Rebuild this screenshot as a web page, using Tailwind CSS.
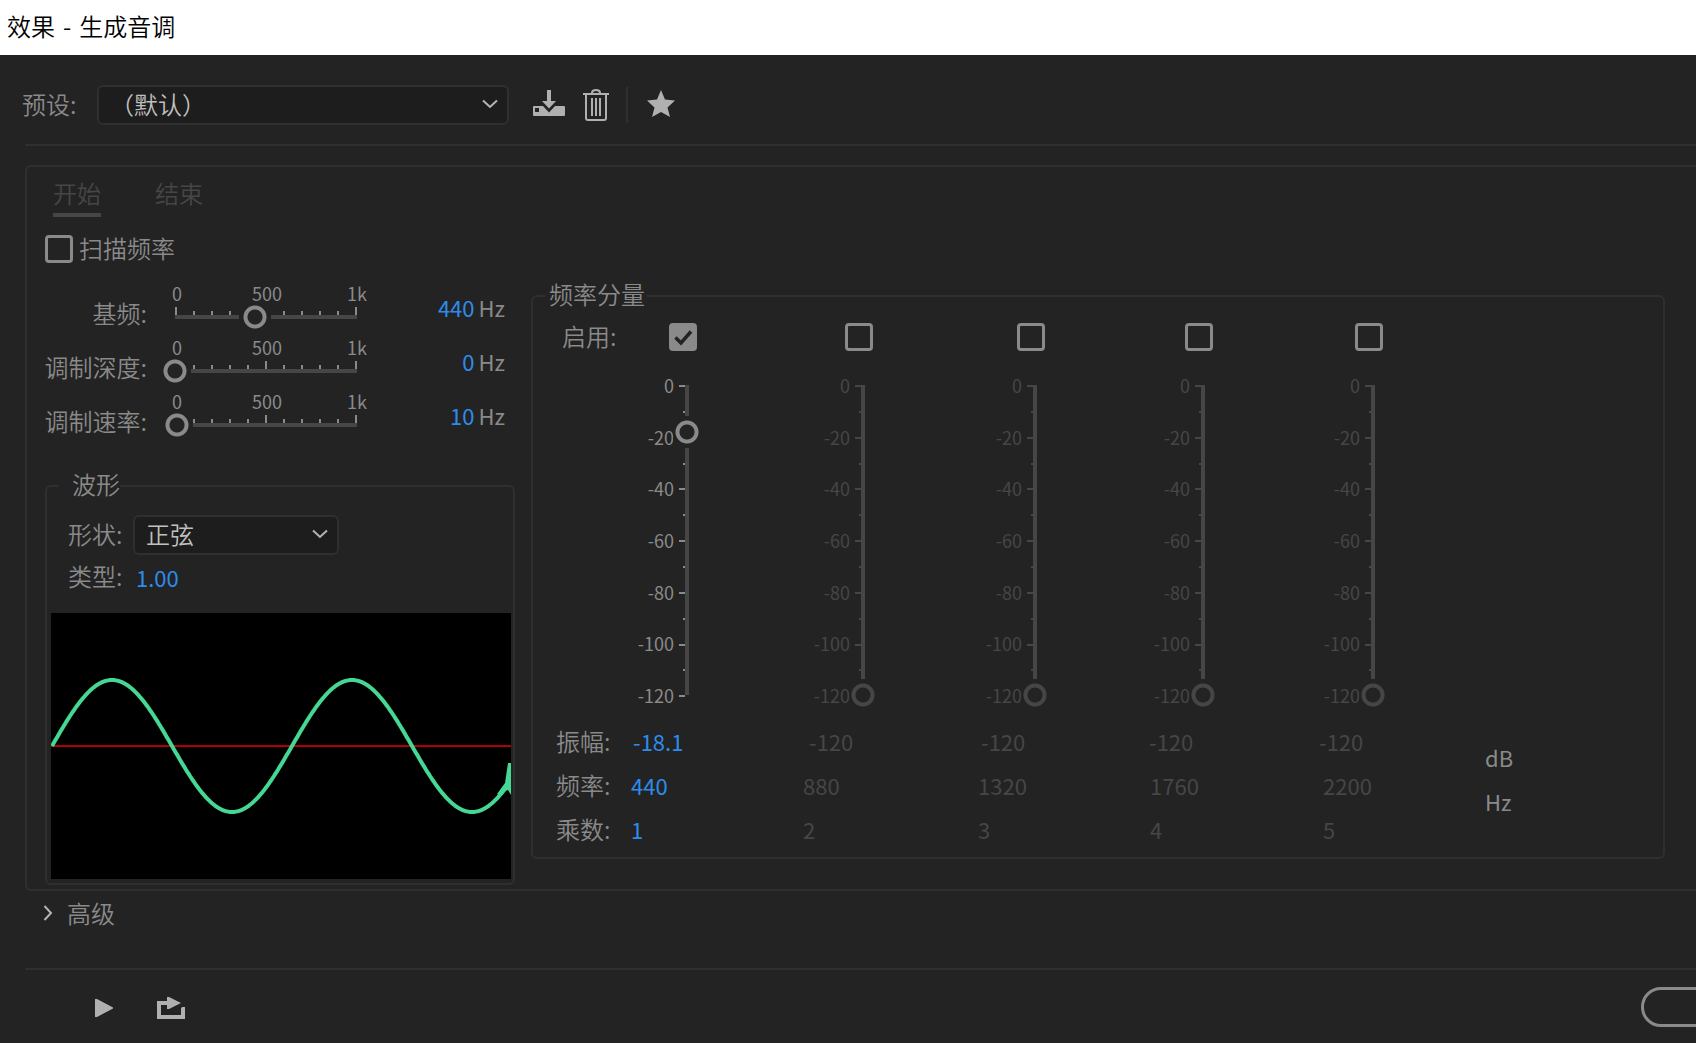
<!DOCTYPE html>
<html lang="zh-CN">
<head>
<meta charset="utf-8">
<title>效果 - 生成音调</title>
<script src="https://cdn.jsdelivr.net/npm/@tailwindcss/browser@4"></script>
</head>
<body class="flex min-h-screen flex-col overflow-x-hidden bg-[#232323] font-['Noto_Sans_CJK_SC',sans-serif] text-2xl/9 font-[350] text-[#8a8a8a]">
<header class="flex h-[55px] shrink-0 items-center bg-white px-[7px] pb-1">
  <h1 class="flex gap-2 text-black"><span>效果</span><span>-</span><span>生成音调</span></h1>
</header>

<main class="flex flex-col pl-[25px]">
  <!-- Preset bar -->
  <div class="-ml-[3px] flex h-[89px] items-center pt-[11px]">
    <label for="preset" class="w-[75px] pb-0.5">预设:</label>
    <div class="relative w-[412px]">
      <select id="preset" class="block h-10 w-full appearance-none rounded-md border-2 border-[#2f2f2f] bg-[#1d1d1d] px-[11px] pb-0.5 text-2xl/8 text-[#c0c0c0]"><option>（默认）</option></select>
      <svg class="pointer-events-none absolute right-[11px] top-[14px]" width="16" height="10" viewBox="0 0 16 10" fill="none" stroke="#b4b4b4" stroke-width="2"><path d="M1 1.500l7 6.500 7-6.500"/></svg>
    </div>
    <button aria-label="保存预设" class="ml-6"><svg class="block" width="32" height="34" viewBox="0 0 32 34" fill="#b0b0b0"><path d="M14 2h4v11h5L16 20.500 9 13h5z"/><path fill-rule="evenodd" d="M1 18h9l6 6.500 6-6.500h9a1 1 0 0 1 1 1v8a1 1 0 0 1-1 1H1a1 1 0 0 1-1-1v-8a1 1 0 0 1 1-1zM2 20v4h4v-4z"/></svg></button>
    <button aria-label="删除预设" class="ml-[18px]"><svg class="block" width="26" height="34" viewBox="0 0 26 34" fill="none" stroke="#b0b0b0" stroke-width="2"><path d="M0 6h26M9 6V4.500Q9.500 2 13 2t4 2.500V6M3 6v24q0 2 2 2h16q2 0 2-2V6M9 10v18M13 10v18M17 10v18"/></svg></button>
    <span class="ml-[17px] h-9 w-0.5 bg-[#2f2f2f]"></span>
    <button aria-label="收藏" class="ml-[19px]"><svg class="block" width="28" height="34" viewBox="0 0 28 34" fill="#b0b0b0"><path d="M14 2l4 9.500 10 1-7.500 7 2.500 9.500-9-5-9 5 2.500-9.500L0 12.500l10-1z"/></svg></button>
  </div>
  <hr class="border-t-2 border-[#2f2f2f]">

  <!-- Tone panel -->
  <section class="mt-[19px] rounded-l-md border-2 border-r-0 border-[#2f2f2f] pb-1 pl-[18px]">
    <nav class="flex gap-[54px] pl-2 pt-2 text-[#464646]">
      <a href="#start" class="border-b-4 border-[#464646] pb-0.5">开始</a>
      <a href="#end">结束</a>
    </nav>
    <label class="mt-[18px] flex h-7 items-center gap-1.5">
      <input type="checkbox" class="size-7 appearance-none rounded border-3 border-[#8a8a8a]"><span class="pb-0.5">扫描频率</span>
    </label>

    <div class="flex gap-4 pt-[13px]">
      <div class="w-[470px] shrink-0">
        <div id="sweeps" class="pt-[9px]"></div>

        <fieldset class="mt-[19px] rounded-md border-2 border-[#2f2f2f] pb-1 pl-1 pr-0.5">
          <legend class="ml-2 pb-1 pl-[13px]">波形</legend>
          <div class="mt-[9px] flex items-center pl-[17px]">
            <label for="shape" class="w-[65px] pb-0.5">形状:</label>
            <div class="relative w-[206px]">
              <select id="shape" class="block h-10 w-full appearance-none rounded-md border-2 border-[#2f2f2f] bg-[#1d1d1d] px-[11px] pb-0.5 text-2xl/8 text-[#c0c0c0]"><option>正弦</option></select>
              <svg class="pointer-events-none absolute right-[11px] top-[14px]" width="16" height="10" viewBox="0 0 16 10" fill="none" stroke="#b4b4b4" stroke-width="2"><path d="M1 1.500l7 6.500 7-6.500"/></svg>
            </div>
          </div>
          <div class="mt-[3px] flex items-center pl-[17px]">
            <label for="kind" class="w-[68px] pb-0.5">类型:</label>
            <input id="kind" value="1.00" class="w-20 text-[22px] font-normal text-[#2d8ceb]">
          </div>
          <svg class="mt-[17px] block w-full bg-black" height="266" viewBox="0 0 460 266" preserveAspectRatio="none">
            <path d="M0 133h460" stroke="#b00000" stroke-width="2"/>
            <path id="wave" fill="none" stroke="#45d895" stroke-width="4"/>
            <path d="M446 181l8-11 3-20h3v32l-3-5-3 1-5 5z" fill="#45d895"/>
          </svg>
        </fieldset>
      </div>

      <fieldset class="mr-[31px] flex-1 self-start rounded-md border-2 border-[#2f2f2f] pb-1.5">
        <legend class="ml-3 pb-1 pl-1 pr-0.5">频率分量</legend>
        <div class="flex">
          <div class="w-[952px] shrink-0">
            <div id="channels" class="grid grid-cols-[98px_176px_172px_168px_170px_168px] pt-[7px]">
              <span class="h-7 pl-[29px] leading-[26px]">启用:</span>
            </div>
            <div id="values" class="pt-2"></div>
          </div>
          <div class="flex flex-col gap-2 self-end pb-8 text-[22px] font-normal"><span>dB</span><span>Hz</span></div>
        </div>
      </fieldset>
    </div>
  </section>

  <button class="mt-1 flex items-center gap-3.5 self-start pl-[18px]">
    <svg width="10" height="16" viewBox="0 0 10 16" fill="none" stroke="#b4b4b4" stroke-width="2"><path d="M1.500 1L8 8l-6.500 7"/></svg><span>高级</span>
  </button>
  <hr class="mt-[37px] border-t-2 border-[#2f2f2f]">

  <!-- Transport -->
  <footer class="flex items-center pl-[70px] pt-[17px]">
    <button aria-label="播放" class="pt-0.5"><svg class="block" width="18" height="20" viewBox="0 0 18 20" fill="#b0b0b0"><path d="M0 1h2l17 9-17 9H0z"/></svg></button>
    <button aria-label="循环播放" class="ml-11 pt-0.5"><svg class="block" width="28" height="24" viewBox="0 0 28 24" fill="#b0b0b0"><path d="M0 5h10V1h2l12 6-12 6h-2V9H4v10h20v-6.500l1-1.500h3v12H0z"/></svg></button>
    <button aria-label="确定" class="-mr-20 ml-auto h-10 w-[135px] rounded-full border-3 border-[#8a8a8a]"></button>
  </footer>
</main>

<script>
const sweeps = [['基频', 440, 440], ['调制深度', 0, 0], ['调制速率', 10, 10]];
const hTicks = Array.from({length: 11}, (_, i) => `<path d="M${1 + i * 18} ${i % 5 ? 6 : 2}V12"/>`).join('');
document.getElementById('sweeps').innerHTML = sweeps.map(([name, value], i) => `
  <div class="flex h-[54px]">
    <label for="sweep${i}" class="-ml-1 mt-2.5 w-[106px] whitespace-nowrap text-right">${name}:</label>
    <div class="ml-3 w-[214px]">
      <div class="grid grid-cols-[36px_144px_36px] pb-1 text-center text-lg/4 font-normal"><span>0</span><span>500</span><span>1k</span></div>
      <div class="relative h-6">
        <svg class="absolute left-4 top-0" width="182" height="16" stroke="#8a8a8a" stroke-width="2">${hTicks}<path d="M0 12h182" stroke="#464646" stroke-width="4"/></svg>
        <input id="sweep${i}" type="range" min="0" max="1000" value="${value}" class="absolute inset-0 h-6 w-full appearance-none bg-transparent [&::-webkit-slider-thumb]:h-6 [&::-webkit-slider-thumb]:w-8 [&::-webkit-slider-thumb]:appearance-none [&::-webkit-slider-thumb]:bg-[radial-gradient(circle,#232323_7px,#8a8a8a_8px,#8a8a8a_11px,#232323_12px)]">
      </div>
    </div>
    <div class="ml-auto mr-2.5 mt-1 flex items-start gap-1 text-[22px] font-normal">
      <input aria-label="${name}" value="${value}" class="h-9 w-16 text-right text-[#2d8ceb]"><span>Hz</span>
    </div>
  </div>`).join('');

const channels = [[-18.1, 440, 1], [-120, 880, 2], [-120, 1320, 3], [-120, 1760, 4], [-120, 2200, 5]];
const vTicks = Array.from({length: 13}, (_, i) => `<path d="M${i % 2 ? 4 : 0} ${Math.round(1 + i * 25.85)}H6"/>`).join('');
const marks = [0, -20, -40, -60, -80, -100, -120].map(m => `<span>${m}</span>`).join('');
document.getElementById('channels').insertAdjacentHTML('beforeend', channels.map(([amp], i) => `
  <div class="pl-[38px]">
    <input type="checkbox" aria-label="启用 ${i + 1}" ${i ? '' : 'checked'} class="block size-7 appearance-none rounded border-3 border-[#8a8a8a] checked:bg-[#8a8a8a] checked:bg-[url('data:image/svg+xml,%3Csvg%20xmlns=%22http://www.w3.org/2000/svg%22%20viewBox=%220%200%2022%2022%22%3E%3Cpath%20d=%22M3.500%2011.500l5.500%205.500L19%205.500%22%20fill=%22none%22%20stroke=%22%23232323%22%20stroke-width=%223.500%22/%3E%3C/svg%3E')]">
  </div>`).join('') + '<span></span>' + channels.map(([amp], i) => `
  <div class="relative mt-[18px] flex h-[342px] ${i ? 'text-[#464646]' : 'text-[#8a8a8a]'}">
    <div class="flex w-[43px] flex-col justify-between py-1.5 text-right text-lg/5 font-normal">${marks}</div>
    <svg class="ml-[5px] mt-4" width="10" height="314" stroke="currentColor" stroke-width="2">${vTicks}<path d="M8 0v310" stroke="#464646" stroke-width="4"/></svg>
    <input type="range" aria-label="振幅 ${i + 1}" min="-120" max="0" step="0.1" value="${amp}" ${i ? 'disabled' : ''} class="absolute left-[42px] top-0 h-[342px] w-7 appearance-none bg-transparent [direction:rtl] [writing-mode:vertical-lr] [&::-webkit-slider-thumb]:h-8 [&::-webkit-slider-thumb]:w-7 [&::-webkit-slider-thumb]:appearance-none ${i ? '[&::-webkit-slider-thumb]:bg-[radial-gradient(circle,#232323_7px,#464646_8px,#464646_11px,#232323_12px)]' : '[&::-webkit-slider-thumb]:bg-[radial-gradient(circle,#232323_7px,#8a8a8a_8px,#8a8a8a_11px,#232323_12px)]'}">
  </div>`).join(''));

document.getElementById('values').innerHTML = ['振幅', '频率', '乘数'].map((name, r) => `
  <div class="grid h-11 items-center ${r ? 'grid-cols-[98px_172px_175px_172px_173px_1fr]' : 'grid-cols-[100px_176px_172px_168px_170px_1fr]'}">
    <span class="pl-[23px]">${name}:</span>
    ${channels.map((c, i) => `<input aria-label="${name} ${i + 1}" value="${c[r]}" ${i ? 'disabled' : ''} class="w-20 text-[22px] font-normal ${i ? 'text-[#464646]' : 'text-[#2d8ceb]'}">`).join('')}
  </div>`).join('');

let d = 'M1 133';
for (let x = 2; x <= 454; x++) d += `L${x} ${(133 - 66 * Math.sin((x - 1) * Math.PI / 120)).toFixed(1)}`;
document.getElementById('wave').setAttribute('d', d);
</script>
</body>
</html>
